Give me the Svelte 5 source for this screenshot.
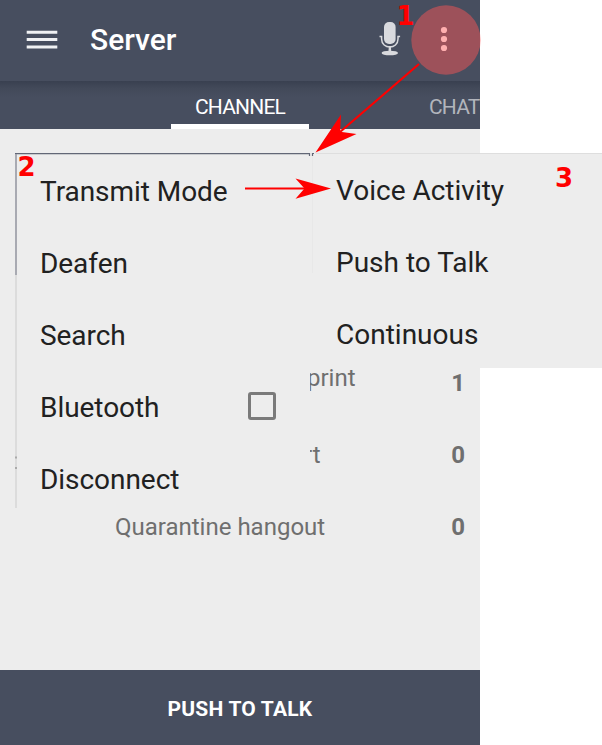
<script>
  const actions = ['Transmit Mode', 'Deafen', 'Search', 'Bluetooth', 'Disconnect'];
  const modes = ['Voice Activity', 'Push to Talk', 'Continuous'];
  const channels = [
    { name: 'print', count: 1, kind: 'first' },
    { name: 'rt', count: 0, kind: 'second' },
    { name: 'Quarantine hangout', count: 0, kind: 'third' }
  ];
</script>

<main class="stage">
  <section class="phone">
    <header class="bar">
      <svg class="burger" width="32" height="20" viewBox="0 0 32 20">
        <path d="M0.7 2.2H31.3M0.7 9.6H31.3M0.7 17H31.3" stroke="#f0f1f3" stroke-width="3" />
      </svg>
      <h1>Server</h1>
      <svg class="mic" width="22" height="36" viewBox="0 0 22 36" fill="#d9dade">
        <rect x="5" y="1" width="11.6" height="22" rx="5" />
        <path d="M.5 15.5H2.6V18C2.6 28.7 19 28.7 19 18V15.5H21.1" fill="none" stroke="#d9dade" stroke-width="1.5" />
        <path d="M9.9 25H11.9L12.2 30H9.5Z" />
        <ellipse cx="10.8" cy="32" rx="8.2" ry="2.3" />
      </svg>
      <svg class="dots" width="8" height="28" viewBox="0 0 8 28" fill="#fff">
        <circle cx="4" cy="4" r="3.1" /><circle cx="4" cy="13" r="3.1" /><circle cx="4" cy="22" r="3.1" />
      </svg>
    </header>
    <nav class="tabs">
      <span class="tab active">CHANNEL</span>
      <span class="tab chat">CHAT</span>
    </nav>
    <div class="list">
      {#each channels as channel}
        <div class="row {channel.kind}">
          <span class="name">{channel.name}</span>
          <b>{channel.count}</b>
        </div>
      {/each}
    </div>
    <footer>PUSH TO TALK</footer>
  </section>

  <div class="menu main-menu">
    {#each actions as label}
      <div class="item">
        <span>{label}</span>
        {#if label === 'Bluetooth'}<i class="box"></i>{/if}
      </div>
    {/each}
  </div>
  <div class="menu sub-menu">
    {#each modes as label}
      <div class="item"><span>{label}</span></div>
    {/each}
  </div>

  <svg class="marks" width="602" height="745" viewBox="0 0 602 745">
    <circle cx="446" cy="40" r="34.7" fill="#ff5555" fill-opacity=".47" />
    <path d="M15 153.6H309.5V156M312.5 156V153.5H314" fill="none" stroke="#626776" stroke-width="1.2" />
    <path d="M16 154V275" stroke="#9c9ea8" stroke-width="1.6" />
    <path d="M316 153.5H602" stroke="#dedede" />
    <path d="M312.5 156V273" stroke="#e8e8e8" />
    <path d="M15 457.5H17M15 468H17" stroke="#aaa" stroke-width="2" />
    <g fill="#f00">
      <path d="M419 64L340 132" stroke="#f00" stroke-width="2.2" />
      <path d="M315.5 152.5L341 114.5L340.2 131.7L356.5 134Z" />
      <path d="M245 188.5H308" stroke="#f00" stroke-width="2" />
      <path d="M331 188.5L295.5 178.5L304.5 188.5L295.5 198.7Z" />
      <text x="396.5" y="24.5">1</text>
      <text x="17.5" y="176">2</text>
      <text x="555" y="187">3</text>
    </g>
  </svg>
</main>

<style>
  .stage {
    position: relative;
    width: 602px;
    height: 745px;
    overflow: hidden;
    background: #fff;
    font-family: Roboto, sans-serif;
  }
  .phone {
    display: flex;
    flex-direction: column;
    width: 480px;
    height: 745px;
    overflow: hidden;
    background: #ededed;
  }
  .bar {
    display: flex;
    align-items: center;
    flex: 0 0 81px;
    box-sizing: border-box;
    padding: 0 32px 3px 26px;
    background: #474e5f;
    color: #fff;
  }
  .burger { margin-top: 1px; }
  h1 {
    flex: 1;
    margin: 0 0 0 32px;
    font-size: 30px;
    font-weight: 500;
  }
  .mic { margin-right: 39px; }
  .dots { margin-top: 1px; }
  .tabs {
    display: flex;
    flex: 0 0 48px;
    height: 48px;
    box-sizing: border-box;
    padding-left: 171px;
    background: linear-gradient(#394050, #424959 7px, #474e5f 16px);
    font-size: 21px;
    line-height: 52px;
    letter-spacing: -0.8px;
  }
  .tab { height: 48px; box-sizing: border-box; white-space: nowrap; }
  .active {
    flex: 0 0 138px;
    border-bottom: 5px solid #fff;
    color: #fff;
    text-align: center;
  }
  .chat { margin-left: 120px; color: #b2b5bc; }
  .list {
    flex: 1;
    min-height: 0;
    padding-top: 218px;
  }
  .row {
    display: flex;
    justify-content: space-between;
    align-items: center;
    height: 72px;
    padding: 0 15px 0 115px;
    color: #6f6f6f;
    font-size: 24px;
  }
  .first { padding-left: 307px; }
  .first .name { margin-bottom: 10px; }
  .second { padding-left: 304px; }
  .row b { font-weight: 700; }
  footer {
    flex: 0 0 75px;
    height: 75px;
    background: #474e5f;
    color: #fff;
    font-size: 21px;
    font-weight: 700;
    line-height: 78px;
    letter-spacing: 0.2px;
    text-align: center;
  }
  .menu {
    position: absolute;
    top: 153px;
    box-sizing: border-box;
    padding-top: 2px;
    background: #ededed;
    color: #212121;
    font-size: 28px;
  }
  .main-menu {
    left: 15px;
    width: 295px;
    height: 355px;
    padding-left: 23px;
    border-left: 2px solid #dcdcdc;
    letter-spacing: -0.05px;
  }
  .sub-menu {
    left: 310px;
    width: 292px;
    height: 215px;
    padding: 1px 0 0 26px;
  }
  .item {
    display: flex;
    align-items: center;
    justify-content: space-between;
    height: 72px;
    padding-right: 34px;
  }
  .box {
    box-sizing: border-box;
    width: 28px;
    height: 28px;
    margin-bottom: 2px;
    border: 3px solid #7a7a7a;
    border-radius: 3px;
  }
  .marks {
    position: absolute;
    inset: 0;
  }
  .marks text {
    font: bold 26px 'DejaVu Sans', sans-serif;
  }
</style>
